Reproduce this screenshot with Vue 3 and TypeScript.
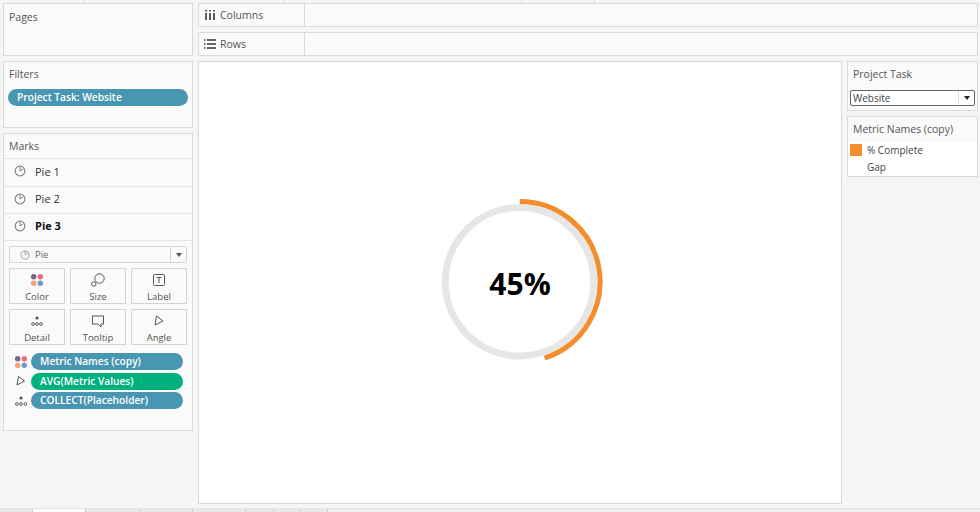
<script setup lang="ts">
const rows = [
  { name: 'Pie 1', bold: false },
  { name: 'Pie 2', bold: false },
  { name: 'Pie 3', bold: true },
]
const tabs = [33, 53, 54, 53, 53, 28, 27, 27]
const cx = 84.8
const cy = 85.75
const r = 80.25
const a = (0.45 * 2 * Math.PI)
const arc = `M ${cx} ${cy - r} A ${r} ${r} 0 0 1 ${cx + r * Math.sin(a)} ${cy - r * Math.cos(a)}`
</script>

<template>
  <div class="app">
    <div class="topstrip">
      <i style="width: 84px"></i><i style="width: 201px"></i><i style="width: 237px"></i><i style="width: 73px"></i>
    </div>
    <div class="main">
      <aside class="left">
        <section class="panel pages"><h3>Pages</h3></section>
        <section class="panel filters">
          <h3>Filters</h3>
          <div class="pill blue wide">Project Task: Website</div>
        </section>
        <section class="panel marks">
          <h3 class="markhead">Marks</h3>
          <div v-for="row in rows" :key="row.name" class="markrow" :class="{ bold: row.bold }">
            <svg class="pieicon" width="12" height="12" viewBox="0 0 13 13">
              <circle cx="6.5" cy="6.5" r="5.3" fill="none" stroke="#777" stroke-width="1.1" />
              <path d="M6.5 6.500V1.500M6.500 6.500L10 4.200" fill="none" stroke="#777" stroke-width="1" />
            </svg>
            <span>{{ row.name }}</span>
          </div>
          <div class="select">
            <svg width="10" height="10" viewBox="0 0 13 13">
              <circle cx="6.5" cy="6.5" r="5.3" fill="none" stroke="#999" stroke-width="1.2" />
              <path d="M6.500 6.500V1.500M6.500 6.500L10 4.200" fill="none" stroke="#999" stroke-width="1.100" />
            </svg>
            <span class="selname">Pie</span>
            <span class="caretbox"><b class="caret"></b></span>
          </div>
          <div class="cards">
            <div class="card">
              <svg width="16" height="16" viewBox="0 0 16 16">
                <circle cx="4.7" cy="4.7" r="2.7" fill="#7b6394" /><circle cx="11.3" cy="4.7" r="2.7" fill="#ee6a7e" />
                <circle cx="4.7" cy="11.3" r="2.7" fill="#f2a36f" /><circle cx="11.3" cy="11.3" r="2.7" fill="#6f9bcb" />
              </svg>
              <span>Color</span>
            </div>
            <div class="card">
              <svg width="16" height="16" viewBox="0 0 16 16">
                <circle cx="9.5" cy="6.500" r="4.700" fill="none" stroke="#555" /><circle cx="3.800" cy="12" r="2.200" fill="#fafafa" stroke="#555" />
              </svg>
              <span>Size</span>
            </div>
            <div class="card">
              <svg width="16" height="16" viewBox="0 0 16 16">
                <rect x="2.500" y="2.500" width="11" height="11" rx="1" fill="none" stroke="#555" />
                <path d="M5.500 5.500h5M8 5.500v5.500" stroke="#555" fill="none" />
              </svg>
              <span>Label</span>
            </div>
            <div class="card">
              <svg width="16" height="16" viewBox="0 0 16 16">
                <circle cx="8" cy="5" r="1.600" fill="#555" />
                <circle cx="4" cy="11" r="1.400" fill="none" stroke="#555" stroke-width=".9" />
                <circle cx="8" cy="11" r="1.400" fill="none" stroke="#555" stroke-width=".9" />
                <circle cx="12" cy="11" r="1.400" fill="none" stroke="#555" stroke-width=".9" />
              </svg>
              <span>Detail</span>
            </div>
            <div class="card">
              <svg width="16" height="16" viewBox="0 0 16 16">
                <path d="M2.500 3h11v8h-2.500v3l-3-3h-5.500z" fill="none" stroke="#555" stroke-linejoin="round" />
              </svg>
              <span>Tooltip</span>
            </div>
            <div class="card">
              <svg width="16" height="16" viewBox="0 0 16 16">
                <path d="M5.500 3l6.500 5-8 4z" fill="none" stroke="#555" stroke-linejoin="round" />
              </svg>
              <span>Angle</span>
            </div>
          </div>
          <div class="shelf">
            <svg width="16" height="16" viewBox="0 0 16 16">
              <circle cx="2.700" cy="4.700" r="2.700" fill="#7b6394" /><circle cx="9.300" cy="4.700" r="2.700" fill="#ee6a7e" />
              <circle cx="2.700" cy="11.300" r="2.700" fill="#f2a36f" /><circle cx="9.300" cy="11.300" r="2.700" fill="#6f9bcb" />
            </svg>
            <div class="pill blue">Metric Names (copy)</div>
          </div>
          <div class="shelf">
            <svg width="16" height="16" viewBox="0 0 16 16">
              <path d="M3.500 3.500l6 4.500-7.500 4z" fill="none" stroke="#555" stroke-linejoin="round" />
            </svg>
            <div class="pill green">AVG(Metric Values)</div>
          </div>
          <div class="shelf">
            <svg width="16" height="16" viewBox="0 0 16 16">
              <circle cx="6" cy="5" r="1.600" fill="#555" />
              <circle cx="1.900" cy="11" r="1.400" fill="none" stroke="#555" stroke-width=".9" />
              <circle cx="6" cy="11" r="1.400" fill="none" stroke="#555" stroke-width=".9" />
              <circle cx="10.400" cy="11" r="1.400" fill="none" stroke="#555" stroke-width=".9" />
            </svg>
            <div class="pill blue">COLLECT(Placeholder)</div>
          </div>
        </section>
      </aside>

      <div class="center">
        <div class="shelfbar">
          <div class="shelfhead">
            <svg width="12" height="12" viewBox="0 0 12 12"><path d="M2 1v1.500M2 4v7M6 1v1.500M6 4v7M10 1v1.500M10 4v7" stroke="#333" stroke-width="1.600" fill="none" /></svg>
            <span>Columns</span>
          </div>
        </div>
        <div class="shelfbar">
          <div class="shelfhead">
            <svg width="12" height="12" viewBox="0 0 12 12"><path d="M0 2h1.500M3 2h9M0 6h1.500M3 6h9M0 10h1.500M3 10h9" stroke="#333" stroke-width="1.400" fill="none" /></svg>
            <span>Rows</span>
          </div>
        </div>
        <div class="body">
          <div class="canvas">
            <div class="ring">
              <svg width="170" height="172" viewBox="0 0 170 172">
                <circle cx="84.500" :cy="cy" r="74.250" fill="none" stroke="#e6e6e6" stroke-width="7" />
                <path :d="arc" fill="none" stroke="#f28e2b" stroke-width="5" />
              </svg>
              <div class="pct">45%</div>
            </div>
          </div>
          <aside class="right">
            <section class="panel task">
              <h3>Project Task</h3>
              <div class="combo"><span>Website</span><span class="combocaret"><b class="caret dark"></b></span></div>
            </section>
            <section class="panel legend">
              <h3>Metric Names (copy)</h3>
              <div class="legendbody">
                <div class="legrow"><i class="swatch"></i><span>% Complete</span></div>
                <div class="legrow"><i class="swatch none"></i><span>Gap</span></div>
              </div>
            </section>
          </aside>
        </div>
      </div>
    </div>
    <div class="tabs">
      <i v-for="(w, n) in tabs" :key="n" :class="{ on: n === 1 }" :style="{ width: w + 'px' }"></i>
    </div>
  </div>
</template>

<style>
html, body { margin: 0; background: #f5f5f5; }
</style>

<style scoped>
.app {
  width: 980px;
  height: 512px;
  overflow: hidden;
  background: #f5f5f5;
  font-family: "Open Sans", "Noto Sans", sans-serif;
  color: #555;
  display: flex;
  flex-direction: column;
}
.topstrip { height: 3px; display: flex; }
.topstrip i { height: 3px; box-sizing: border-box; border-right: 1px solid #ddd; }
.main { flex: none; height: 501px; display: flex; padding-left: 3px; }
.left { width: 190px; display: flex; flex-direction: column; gap: 5px; margin-right: 5px; }
.panel { background: #fafafa; border: 1px solid #d9d9d9; box-sizing: border-box; }
h3 { margin: 0; font-weight: 400; font-size: 10.5px; line-height: 14px; color: #555; }
.pages { height: 53px; padding: 6px 5px; }
.filters { height: 67px; padding: 5px 4px; }
.filters h3 { padding-left: 1px; }
.pill {
  height: 17px;
  border-radius: 9px;
  color: #fff;
  font-size: 10.2px;
  font-weight: 600;
  line-height: 17px;
  padding-left: 9px;
  box-sizing: border-box;
  flex: 1;
  white-space: nowrap;
}
.blue { background: #4996b2; }
.green { background: #00b180; }
.wide { margin-top: 8px; }
.marks { height: 298px; }
.markhead { padding: 5px 5px 0; height: 25px; box-sizing: border-box; border-bottom: 1px solid #e4e4e4; }
.markrow {
  height: 27px;
  display: flex;
  align-items: center;
  box-sizing: border-box;
  border-bottom: 1px solid #e4e4e4;
  padding: 0 0 3px 10px;
  font-size: 11px;
  color: #333;
}
.markhead + .markrow { height: 28px; }
.markrow span { margin-left: 9px; }
.markrow.bold { color: #111; font-weight: 700; }
.select {
  margin: 5px 5px 0;
  height: 17px;
  box-sizing: border-box;
  border: 1px solid #d4d4d4;
  border-radius: 2px;
  background: #fafafa;
  display: flex;
  align-items: center;
  padding-left: 10px;
  font-size: 9.5px;
  color: #666;
}
.selname { margin-left: 5px; flex: 1; }
.caretbox { width: 15px; height: 100%; border-left: 1px solid #d4d4d4; display: flex; align-items: center; justify-content: center; }
.caret { width: 0; height: 0; border: 3.5px solid transparent; border-top: 4px solid #555; border-bottom: 0; }
.caret.dark { border-top-color: #222; }
.cards {
  margin: 5px 5px 0;
  display: grid;
  grid-template-columns: repeat(3, 56px);
  grid-auto-rows: 36px;
  gap: 5px;
}
.card {
  border: 1px solid #d4d4d4;
  box-sizing: border-box;
  display: flex;
  flex-direction: column;
  align-items: center;
  padding-top: 3px;
  gap: 2px;
  font-size: 9.5px;
  line-height: 13px;
  color: #555;
  background: #fafafa;
}
.shelf { display: flex; align-items: center; height: 17px; margin: 0 9px 2.5px 11px; }
.cards + .shelf { margin-top: 8px; }
.shelf svg { flex: none; width: 16px; }
.center { flex: 1; display: flex; flex-direction: column; gap: 5px; min-width: 0; padding-right: 2px; }
.shelfbar { height: 24px; flex: none; background: #fafafa; border: 1px solid #d9d9d9; box-sizing: border-box; }
.shelfhead {
  width: 106px;
  height: 100%;
  box-sizing: border-box;
  border-right: 1px solid #d9d9d9;
  display: flex;
  align-items: center;
  padding-left: 5px;
  gap: 4px;
  font-size: 10.5px;
  color: #555;
}
.body { flex: 1; display: flex; gap: 5px; min-height: 0; }
.canvas {
  width: 644px;
  height: 443px;
  box-sizing: border-box;
  background: #fff;
  border: 1px solid #d9d9d9;
  display: flex;
  align-items: center;
  justify-content: center;
  padding-bottom: 1px;
}
.ring { display: grid; place-items: center; }
.ring > * { grid-area: 1 / 1; }
.ring svg { display: block; }
.pct { font-size: 30px; font-weight: 700; color: #000; line-height: 1; margin-top: 3px; }
.right { width: 131px; display: flex; flex-direction: column; gap: 5px; }
.task { height: 50px; padding: 5px 2px 0; }
.task h3 { padding-left: 3px; }
.combo {
  margin-top: 9px;
  height: 16px;
  box-sizing: border-box;
  border: 1px solid #666;
  border-radius: 2px;
  background: #fff;
  display: flex;
  align-items: center;
  justify-content: space-between;
  padding-left: 2px;
  font-size: 10px;
  color: #444;
}
.combocaret { width: 15px; height: 100%; display: flex; align-items: center; justify-content: center; border-left: 1px solid #ddd; }
.legend { height: 61px; }
.legend h3 { padding: 5px 5px 0; height: 25px; box-sizing: border-box; }
.legendbody { background: #fff; height: 34px; padding-left: 2px; }
.legrow { height: 17px; box-sizing: border-box; padding-bottom: 1px; display: flex; align-items: center; font-size: 10px; color: #444; gap: 5px; }
.swatch { width: 12px; height: 12px; background: #f28e2b; }
.swatch.none { background: transparent; }
.tabs { flex: none; height: 4px; margin-top: 4px; display: flex; border-top: 1px solid #e4e4e4; box-sizing: border-box; background: #eee; }
.tabs i { height: 100%; box-sizing: border-box; border-right: 1px solid #ccc; background: #e8e8e8; }
.tabs i.on { background: #fff; }
</style>
